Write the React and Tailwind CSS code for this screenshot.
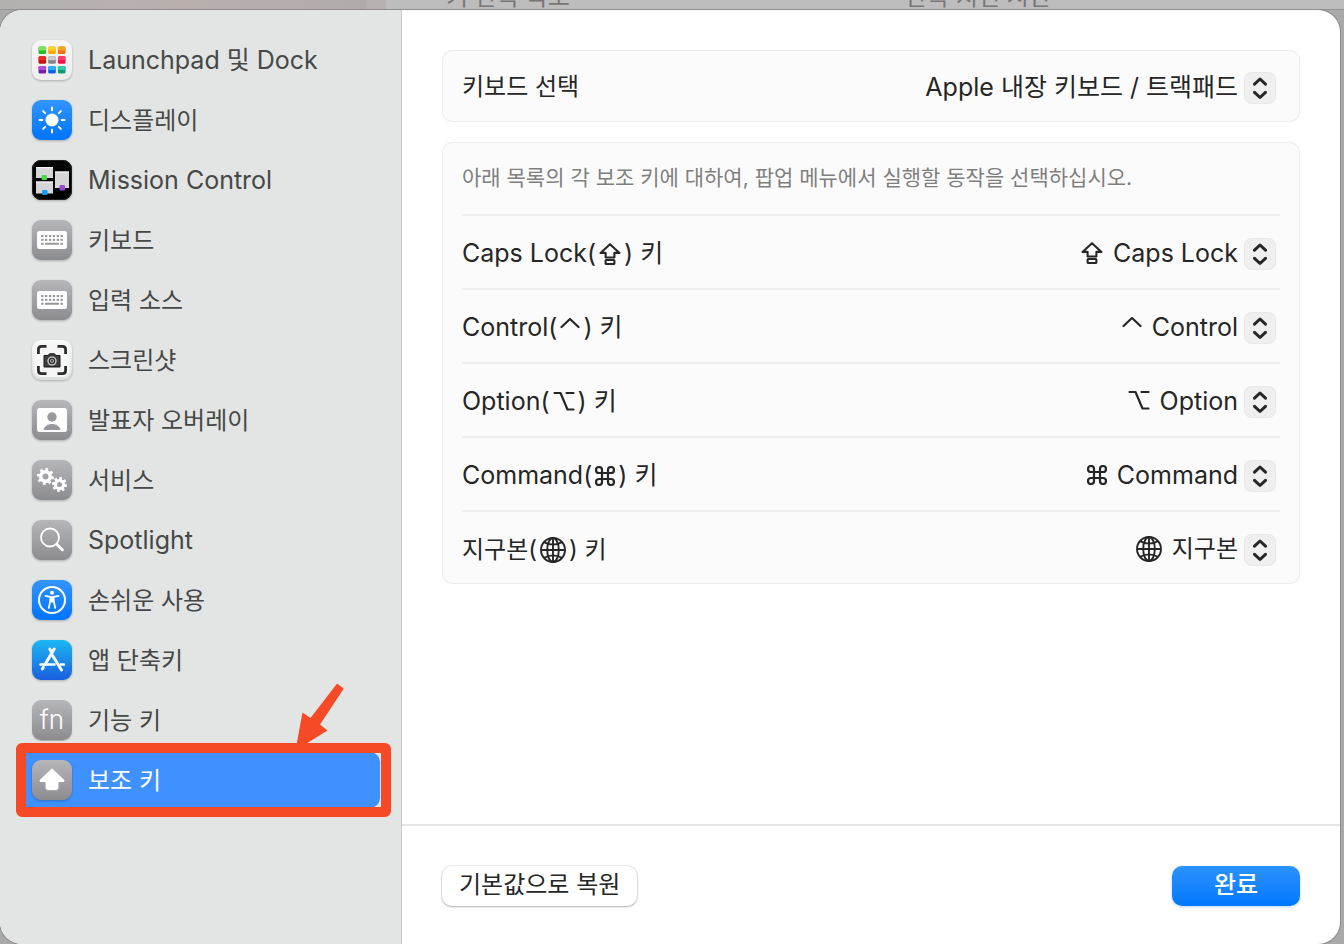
import React from "react";

function Tile({ from, to, children }) {
  const id = React.useId();
  return (
    <svg viewBox="0 0 40 40" className="size-10 shrink-0 overflow-visible drop-shadow-[0_1px_1px_rgba(0,0,0,0.25)]" aria-hidden="true">
      <defs>
        <linearGradient id={id} x1="0" y1="0" x2="0" y2="1">
          <stop offset="0" stopColor={from} />
          <stop offset="1" stopColor={to} />
        </linearGradient>
      </defs>
      <rect width="40" height="40" rx="9" fill={`url(#${id})`} />
      {children}
    </svg>
  );
}

const GrayTile = ({ children }) => <Tile from="#b5b5ba" to="#8b8b90">{children}</Tile>;
const BlueTile = ({ children }) => <Tile from="#3395ff" to="#0074fe">{children}</Tile>;

const DOTS = [
  ["#7fe05c", "#23bf22"], ["#ffd02e", "#ffa600"], ["#ffa21f", "#ee7014"],
  ["#f0281f", "#c4120f"], ["#c9cccf", "#808588"], ["#ff3b68", "#f8114a"],
  ["#b44fd6", "#7420a8"], ["#22b4f5", "#0e62e8"], ["#2cc9a2", "#119678"],
];

function LaunchpadIcon() {
  return (
    <Tile from="#f7f7f8" to="#eeeeef">
      {DOTS.map(([a, b], i) => {
        const x = 6.5 + (i % 3) * 9.7;
        const y = 6.5 + Math.floor(i / 3) * 9.7;
        return (
          <g key={i}>
            <rect x={x} y={y} width="7.600" height="7.600" rx="1.500" fill={b} />
            <rect x={x} y={y} width="7.600" height="4" rx="1.500" fill={a} />
          </g>
        );
      })}
    </Tile>
  );
}

function DisplayIcon() {
  return (
    <BlueTile>
      <circle cx="20" cy="20" r="6.5" fill="#fff" />
      <g stroke="#fff" strokeWidth="2" strokeLinecap="round">
        {[0, 45, 90, 135, 180, 225, 270, 315].map((a) => (
          <path key={a} d="M20 7.5V10.3" transform={`rotate(${a} 20 20)`} />
        ))}
      </g>
    </BlueTile>
  );
}

function MissionControlIcon() {
  return (
    <Tile from="#050505" to="#000000">
      <rect x="0.5" y="0.5" width="39" height="39" rx="8.5" fill="none" stroke="#222222" />
      <g fill="#d6d6d6">
        <rect x="4" y="7" width="17" height="11" />
        <rect x="4" y="21.500" width="17" height="12" />
        <rect x="23" y="11.500" width="14" height="16.500" />
      </g>
      <g fill="#f4f4f4">
        <rect x="4" y="7" width="17" height="1.200" />
        <rect x="4" y="21.500" width="17" height="1.200" />
        <rect x="23" y="11.500" width="14" height="1.200" />
      </g>
      <rect x="9.500" y="15" width="5.500" height="5" rx="1.200" fill="#46d845" />
      <rect x="10" y="30" width="5.500" height="5" rx="1.200" fill="#189cf4" />
      <rect x="27.500" y="25" width="5.500" height="5.500" rx="1.200" fill="#9b4bd2" />
    </Tile>
  );
}

function KeyboardIcon() {
  const xs = [9.2, 13, 16.9, 20.8, 24.7, 28.5];
  return (
    <GrayTile>
      <rect x="5" y="11" width="30" height="18" rx="2.500" fill="#fff" />
      <g fill="#96969b">
        {[15, 18.8].map((y) => xs.map((x) => <rect key={`${x}-${y}`} x={x} y={y} width="2.300" height="2.100" />))}
        <rect x="9.200" y="22.700" width="2.300" height="2.100" />
        <rect x="13" y="22.700" width="14" height="2.100" rx="0.500" />
        <rect x="28.500" y="22.700" width="2.300" height="2.100" />
      </g>
    </GrayTile>
  );
}

function ScreenshotIcon() {
  return (
    <Tile from="#fbfbfb" to="#dcdcdc">
      <rect x="2" y="2" width="36" height="35" rx="7" fill="#f6f6f6" />
      <path
        d="M6.400 14V9.500Q6.400 6.400 9.500 6.400H14.500M25.500 6.400H30.500Q33.600 6.400 33.600 9.500V14M33.600 26V30.500Q33.600 33.600 30.500 33.600H25.500M14.500 33.600H9.500Q6.400 33.600 6.400 30.500V26"
        fill="none"
        stroke="#2c2c2c"
        strokeWidth="2.800"
      />
      <path d="M12 15.500H16L17.500 13.800H22.500L24 15.500H28V27H12Z" fill="#3f3f3f" stroke="#161616" />
      <circle cx="20" cy="21" r="4.600" fill="#d8d8d8" />
      <circle cx="20" cy="21" r="3.300" fill="#222" />
      <circle cx="20" cy="21" r="2" fill="#bbb" />
      <circle cx="20" cy="21" r="1" fill="#333" />
    </Tile>
  );
}

function PresenterIcon() {
  return (
    <GrayTile>
      <rect x="5" y="8" width="30" height="24" rx="2.500" fill="#fff" />
      <g fill="#98989d">
        <circle cx="20" cy="17" r="4.700" />
        <path d="M11.500 30C12.500 26 16 24 20 24S27.500 26 28.500 30Z" />
      </g>
    </GrayTile>
  );
}

function Gear({ cx, cy, r, hole }) {
  return (
    <g transform={`translate(${cx} ${cy})`}>
      <circle r={(r - 2 + hole) / 2} fill="none" stroke="#fff" strokeWidth={r - 2 - hole} />
      {[0, 45, 90, 135, 180, 225, 270, 315].map((a) => (
        <rect key={a} x="-1.400" y={-r} width="2.800" height="3" rx="0.700" fill="#fff" transform={`rotate(${a + 10})`} />
      ))}
    </g>
  );
}

function ServicesIcon() {
  return (
    <GrayTile>
      <Gear cx={13.5} cy={16.5} r={8.5} hole={3} />
      <Gear cx={27.5} cy={24.5} r={7.5} hole={2.5} />
    </GrayTile>
  );
}

function SpotlightIcon() {
  return (
    <GrayTile>
      <circle cx="18" cy="17.500" r="9" fill="none" stroke="#fff" strokeWidth="1.800" />
      <path d="M24.800 24.300L30.500 30" stroke="#fff" strokeWidth="2.800" strokeLinecap="round" />
    </GrayTile>
  );
}

function AccessibilityIcon() {
  return (
    <BlueTile>
      <circle cx="20" cy="20" r="13" fill="none" stroke="#fff" strokeWidth="2" />
      <circle cx="20" cy="12.700" r="2" fill="#fff" />
      <path d="M13.500 15.800L18.300 16.800V20.500L16.800 28M26.500 15.800L21.700 16.800V20.500L23.200 28" fill="none" stroke="#fff" strokeWidth="1.700" strokeLinecap="round" strokeLinejoin="round" />
      <path d="M17.700 16.300H22.300L22 22.500H18Z" fill="#fff" />
    </BlueTile>
  );
}

function AppStoreIcon() {
  return (
    <Tile from="#1cb8f3" to="#1a5fe0">
      <g fill="none" stroke="#fff" strokeWidth="3" strokeLinecap="round">
        <path d="M22.200 9L13 24.500M10.300 29L11.300 27.300" />
        <path d="M17.800 9L19.800 12.400M20.500 15.500L29.500 30" />
        <path d="M8.500 24.500H22.500M28.500 24.500H32" strokeWidth="2.500" />
      </g>
    </Tile>
  );
}

function FnIcon() {
  return (
    <span className="flex size-10 shrink-0 items-center justify-center rounded-[9px] bg-linear-to-b from-[#b5b5ba] to-[#8b8b90] text-[26px] leading-10 font-light text-white shadow-[0_1px_1px_rgba(0,0,0,0.25)]">
      fn
    </span>
  );
}

function ModifierIcon() {
  return (
    <GrayTile>
      <path d="M20 8.800L32 20.200Q32.500 21.500 31 21.600H26V28Q26 29.700 24.300 29.700H15.700Q14 29.700 14 28V21.600H9Q7.500 21.500 8 20.200Z" fill="#fff" stroke="#fff" strokeWidth="1" strokeLinejoin="round" />
    </GrayTile>
  );
}

const CapsGlyph = () => (
  <svg viewBox="0 0 22 22" className="size-[22px] shrink-0" fill="none" stroke="currentColor" strokeWidth="2.100" strokeLinejoin="round" aria-hidden="true">
    <path d="M11 1.200L20.500 9.900H15.400V14.500H6.600V9.900H1.500Z" />
    <rect x="6.600" y="17" width="8.800" height="4" rx="0.800" />
  </svg>
);

const ControlGlyph = () => (
  <svg viewBox="0 0 20 22" className="h-[22px] w-5 shrink-0" fill="none" stroke="currentColor" strokeWidth="2.200" strokeLinecap="round" strokeLinejoin="round" aria-hidden="true">
    <path d="M1.500 10L10 2L18.500 10" />
  </svg>
);

const OptionGlyph = () => (
  <svg viewBox="0 0 22 22" className="size-[22px] shrink-0" fill="none" stroke="currentColor" strokeWidth="2.200" strokeLinecap="round" strokeLinejoin="round" aria-hidden="true">
    <path d="M1.500 2H7.500L14.500 18.500H20.500M13.500 2H20.500" />
  </svg>
);

const CommandGlyph = () => (
  <svg viewBox="2 2 20 20" className="size-5 shrink-0" fill="none" stroke="currentColor" strokeWidth="2.200" aria-hidden="true">
    <path d="M15 6v12a3 3 0 1 0 3-3H6a3 3 0 1 0 3 3V6a3 3 0 1 0-3 3h12a3 3 0 1 0-3-3" />
  </svg>
);

const GlobeGlyph = () => (
  <svg viewBox="0 0 26 26" className="size-[26px] shrink-0" fill="none" stroke="currentColor" strokeWidth="1.900" aria-hidden="true">
    <circle cx="13" cy="13" r="12" />
    <ellipse cx="13" cy="13" rx="5.800" ry="12" />
    <path d="M13 1V25M1 13H25M4 5.200Q13 10 22 5.200M4 20.800Q13 16 22 20.800" />
  </svg>
);

const NAV = [
  { label: "Launchpad 및 Dock", Icon: LaunchpadIcon },
  { label: "디스플레이", Icon: DisplayIcon },
  { label: "Mission Control", Icon: MissionControlIcon },
  { label: "키보드", Icon: KeyboardIcon },
  { label: "입력 소스", Icon: KeyboardIcon },
  { label: "스크린샷", Icon: ScreenshotIcon },
  { label: "발표자 오버레이", Icon: PresenterIcon },
  { label: "서비스", Icon: ServicesIcon },
  { label: "Spotlight", Icon: SpotlightIcon },
  { label: "손쉬운 사용", Icon: AccessibilityIcon },
  { label: "앱 단축키", Icon: AppStoreIcon },
  { label: "기능 키", Icon: FnIcon },
  { label: "보조 키", Icon: ModifierIcon, selected: true },
];

const KEYS = [
  { id: "caps", name: "Caps Lock", Glyph: CapsGlyph },
  { id: "control", name: "Control", Glyph: ControlGlyph },
  { id: "option", name: "Option", Glyph: OptionGlyph },
  { id: "command", name: "Command", Glyph: CommandGlyph },
  { id: "globe", name: "지구본", Glyph: GlobeGlyph },
];

// Latin letters are set slightly larger than Hangul so that both look the same height.
const sizeFor = (text) => (/[A-Za-z]/.test(text) ? "text-[25px]" : "text-2xl");

function Highlight() {
  return (
    <>
      <span className="pointer-events-none absolute -top-[9px] -right-[11px] -bottom-[9px] -left-1 rounded-md border-10 border-[#f64925]" />
      <svg viewBox="0 0 48 62" className="pointer-events-none absolute right-9 bottom-full mb-[7px] h-[62px] w-12" aria-hidden="true">
        <path d="M0.500 62L6.500 29.500L14.500 35L40.500 1.200Q41 0.500 42 1.200L47 5Q47.800 5.700 47.200 6.500L24 41.500L31.500 47.500L8 62Z" fill="#f64925" />
      </svg>
    </>
  );
}

function Popup({ id, value, Glyph }) {
  return (
    <div className={`flex items-center gap-2.5 ${sizeFor(value)}`}>
      {Glyph && (
        <span className="pb-0.5">
          <Glyph />
        </span>
      )}
      <div className="relative flex items-center">
        <select id={id} className="h-8 appearance-none field-sizing-content bg-transparent pr-[38px] pb-0.5 leading-[30px] outline-none">
          <option>{value}</option>
        </select>
        <span className="pointer-events-none absolute right-0 size-8 rounded-lg bg-[#efefef] ring-1 ring-[#e9e9e9] ring-inset">
          <svg viewBox="0 0 32 32" className="size-8" fill="none" stroke="currentColor" strokeWidth="3" strokeLinecap="round" strokeLinejoin="round" aria-hidden="true">
            <path d="M10.500 12.200L16 7L21.500 12.200M10.500 20.300L16 25.500L21.500 20.300" />
          </svg>
        </span>
      </div>
    </div>
  );
}

export default function App() {
  return (
    <div className="flex min-h-screen flex-col bg-[#a9a9a9] font-['Inter','Noto_Sans_CJK_KR',sans-serif] text-2xl text-[#262626]">
      <div className="flex h-[10px] overflow-hidden border-b border-[#939393] bg-[#bdbdbd] text-[#777777]" aria-hidden="true">
        <div className="w-[366px] shrink-0 bg-linear-to-r from-[#b3b1b0] via-[#b9b0ae] to-[#b0abaa]" />
        <div className="w-5 shrink-0 bg-[#b7b1b0]" />
        <div className="grid flex-1 grid-cols-2 content-end gap-5 pl-[60px] leading-6">
          <span>키 반복 속도</span>
          <span>반복 지연 시간</span>
        </div>
      </div>

      <div className="mr-1 flex flex-1 overflow-hidden rounded-[22px] bg-white shadow-[0_0_0_1px_#8c8c8c]">
        <nav className="w-[402px] shrink-0 border-r border-[#c9c9c9] bg-[#e3e5e4] pt-[22px] pr-[21px] pl-5">
          <ul className="flex flex-col gap-1">
            {NAV.map(({ label, Icon, selected }) => (
              <li key={label} className="relative">
                <a
                  href="#"
                  aria-current={selected ? "page" : undefined}
                  className={
                    selected
                      ? "flex h-14 items-center gap-4 rounded-[10px] bg-[#3e91fe] px-3 text-white"
                      : "flex h-14 items-center gap-4 rounded-[10px] px-3 text-[#464847]"
                  }
                >
                  <Icon />
                  <span className={`pt-0.5 whitespace-nowrap ${sizeFor(label)}`}>{label}</span>
                </a>
                {selected && <Highlight />}
              </li>
            ))}
          </ul>
        </nav>

        <main className="flex min-w-0 flex-1 flex-col">
          <div className="flex flex-1 flex-col gap-5 px-10 pt-10">
            <section className="flex h-[72px] items-center justify-between rounded-[10px] bg-[#fbfbfb] pt-1 pr-6 pl-5 ring-1 ring-[#ececec] ring-inset">
              <label htmlFor="keyboard" className="pb-0.5">키보드 선택</label>
              <Popup id="keyboard" value="Apple 내장 키보드 / 트랙패드" />
            </section>

            <section className="rounded-[10px] bg-[#fbfbfb] px-5 ring-1 ring-[#ececec] ring-inset">
              <p className="flex h-[72px] items-center text-[21px] text-[#7f7f7f]">
                아래 목록의 각 보조 키에 대하여, 팝업 메뉴에서 실행할 동작을 선택하십시오.
              </p>
              {KEYS.map(({ id, name, Glyph }) => (
                <div key={id} className="flex h-[74px] items-center justify-between border-t-2 border-[#eeeeee] pt-1 pr-1">
                  <label htmlFor={id} className={`flex items-center gap-[3px] whitespace-pre ${sizeFor(name)}`}>
                    <span>{name}(</span>
                    <Glyph />
                    <span>) 키</span>
                  </label>
                  <Popup id={id} value={name} Glyph={Glyph} />
                </div>
              ))}
            </section>
          </div>

          <footer className="flex items-center justify-between border-t-2 border-[#e5e5e5] px-10 pt-10 pb-[38px]">
            <button className="h-10 rounded-[10px] bg-white px-[17px] pb-0.5 leading-[38px] shadow-[0_0_1px_1px_rgba(0,0,0,0.08),0_1px_2px_rgba(0,0,0,0.25)]">
              기본값으로 복원
            </button>
            <button className="h-10 w-32 rounded-[10px] bg-linear-to-b from-[#2a92ff] to-[#0077ff] pb-0.5 leading-[38px] font-medium text-white shadow-[0_1px_3px_rgba(0,119,255,0.3)]">
              완료
            </button>
          </footer>
        </main>
      </div>
    </div>
  );
}
